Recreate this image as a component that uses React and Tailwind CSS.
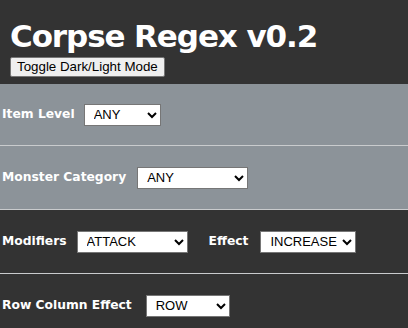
import React from "react";

const labelCls =
  "text-white font-bold text-[12.3px] font-['DejaVu_Sans',sans-serif] whitespace-nowrap";
const selectCls =
  "h-[22px] bg-white text-black border border-[#767676] pl-[5px] text-[13px] font-['Liberation_Sans',Arial,sans-serif]";

function Row({ bg, h, children, line = true }) {
  return (
    <div className={`${bg} ${line ? "border-b border-[#c9cbcd]" : ""}`}>
      <div className={`${h} flex items-center pl-[2px]`}>{children}</div>
    </div>
  );
}

export default function App() {
  return (
    <div className="w-[408px] h-[328px] overflow-hidden bg-[#333333]">
      <div className="h-[84px] bg-[#333333] pl-[10px] pt-[19px]">
        <h1 className="text-white font-bold text-[31px] tracking-[-1.1px] leading-[34px] font-['DejaVu_Sans',sans-serif] whitespace-nowrap">
          Corpse Regex v0.2
        </h1>
        <button className="h-[20px] px-[6px] bg-[#efefef] border border-[#767676] rounded-[2px] text-black text-[13.33px] leading-[16px] font-['Liberation_Sans',Arial,sans-serif]">
          Toggle Dark/Light Mode
        </button>
      </div>

      <Row bg="bg-[#8c9399]" h="h-[61px]">
        <span className={labelCls}>Item Level</span>
        <select className={`${selectCls} w-[77px] ml-[9px]`} defaultValue="ANY">
          <option>ANY</option>
        </select>
      </Row>

      <Row bg="bg-[#8c9399]" h="h-[63px]">
        <span className={labelCls}>Monster Category</span>
        <select className={`${selectCls} w-[111px] ml-[11px]`} defaultValue="ANY">
          <option>ANY</option>
        </select>
      </Row>

      <Row bg="bg-[#333333]" h="h-[63px]">
        <span className={labelCls}>Modifiers</span>
        <select className={`${selectCls} w-[111px] ml-[10px]`} defaultValue="ATTACK">
          <option>ATTACK</option>
        </select>
        <span className={`${labelCls} ml-[21px]`}>Effect</span>
        <select className={`${selectCls} w-[96px] ml-[12px]`} defaultValue="INCREASE">
          <option>INCREASE</option>
        </select>
      </Row>

      <Row bg="bg-[#333333]" h="h-[63px]" line={false}>
        <span className={labelCls}>Row Column Effect</span>
        <select className={`${selectCls} w-[84px] ml-[14px]`} defaultValue="ROW">
          <option>ROW</option>
        </select>
      </Row>
    </div>
  );
}
